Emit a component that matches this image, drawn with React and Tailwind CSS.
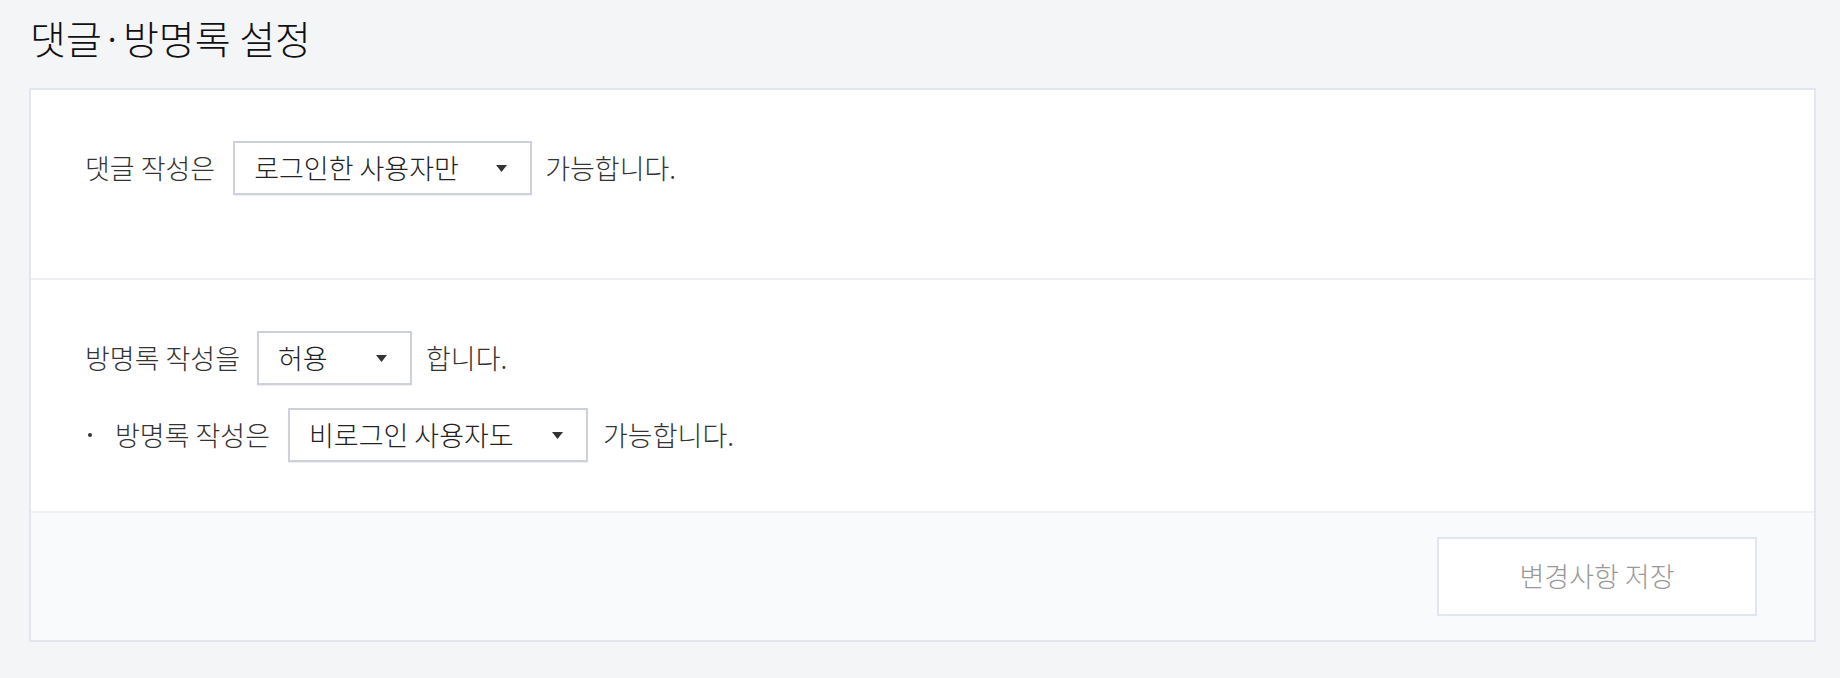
import React from "react";

const font = { fontFamily: '"Noto Sans CJK KR", "Noto Sans", sans-serif' };

function Arrow() {
  return (
    <svg width="11" height="7" viewBox="0 0 11 7" className="shrink-0">
      <path d="M0 0 L11 0 L5.5 7 Z" fill="#333333" />
    </svg>
  );
}

function Select({ value, width }) {
  return (
    <div
      className={`flex h-[54px] items-center justify-between border-2 border-[#ccd1dc] bg-white pl-[19px] pr-[23px] text-[#222] shadow-[0_1px_1px_rgba(0,0,0,0.06)] ${width}`}
    >
      <span>{value}</span>
      <Arrow />
    </div>
  );
}

export default function App() {
  return (
    <div
      className="min-h-screen bg-[#f4f5f7] pl-[29px] pr-[24px] pt-[11px] text-[27px] font-light text-[#333]"
      style={font}
    >
      <h1 className="pl-[1px] text-[39px] font-light leading-[52px] text-[#111]">
        댓글·방명록 설정
      </h1>
      <div className="mt-[25px] border-2 border-[#e3e6ee] bg-white">
        <div className="border-b-2 border-[#eff0f5] pb-[83px] pl-[54px] pt-[51px]">
          <div className="flex items-center">
            <span>댓글 작성은</span>
            <div className="ml-[18px] mr-[13px]">
              <Select value="로그인한 사용자만" width="w-[299px]" />
            </div>
            <span>가능합니다.</span>
          </div>
        </div>
        <div className="border-b-2 border-[#eff0f5] pb-[49px] pl-[54px] pt-[51px]">
          <div className="flex flex-col gap-[23px]">
            <div className="flex items-center">
              <span>방명록 작성을</span>
              <div className="ml-[17px] mr-[14px]">
                <Select value="허용" width="w-[155px]" />
              </div>
              <span>합니다.</span>
            </div>
            <div className="flex items-center">
              <span className="ml-[3px] mr-[23px] h-[4px] w-[4px] rounded-full bg-[#333]" />
              <span>방명록 작성은</span>
              <div className="ml-[18px] mr-[15px]">
                <Select value="비로그인 사용자도" width="w-[300px]" />
              </div>
              <span>가능합니다.</span>
            </div>
          </div>
        </div>
        <div className="flex justify-end bg-[#f9fafc] pb-[24px] pr-[57px] pt-[24px]">
          <button className="flex h-[79px] w-[320px] items-center justify-center border-2 border-[#e1e5ee] bg-white text-[#999]">
            변경사항 저장
          </button>
        </div>
      </div>
    </div>
  );
}
